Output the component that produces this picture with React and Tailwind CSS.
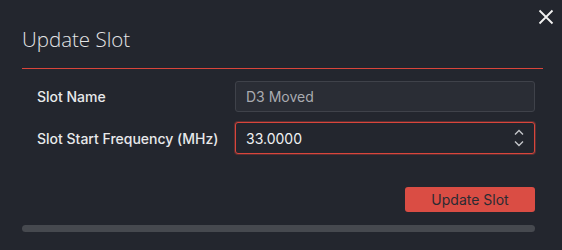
import { useState } from "react";

function CloseIcon() {
  return (
    <svg width="16" height="16" viewBox="0 0 16 16" fill="none">
      <path d="M1.5 1.5 L14.5 14.5 M14.5 1.5 L1.5 14.5" stroke="#f2f2f2" strokeWidth="1.8" />
    </svg>
  );
}

function Spinner() {
  return (
    <div className="flex flex-col items-center gap-[4px] text-[#c4c6cb]">
      <svg width="10" height="7" viewBox="0 0 10 7" fill="none">
        <path d="M1 5.5 L5 1.5 L9 5.5" stroke="currentColor" strokeWidth="1.4" />
      </svg>
      <svg width="10" height="7" viewBox="0 0 10 7" fill="none">
        <path d="M1 1.5 L5 5.5 L9 1.5" stroke="currentColor" strokeWidth="1.4" />
      </svg>
    </div>
  );
}

export default function App() {
  const [freq, setFreq] = useState("33.0000");

  return (
    <div className="relative w-[562px] h-[250px] overflow-hidden bg-[#23262e] font-['Inter',sans-serif]">
      {/* close */}
      <button className="absolute top-[9px] right-[8px]">
        <CloseIcon />
      </button>

      <div className="pl-[22px] pr-[19px]">
        {/* header */}
        <div className="h-[69px] border-b border-[#d9453b] pt-[25px]">
          <h2 className="font-['Open_Sans',sans-serif] font-light text-[20.5px] leading-[28px] text-[#e4e5e7]">
            Update Slot
          </h2>
        </div>

        {/* form */}
        <div className="pl-[15px] pr-[8px] pt-[12px] flex flex-col gap-[10px]">
          <div className="flex items-center">
            <label className="w-[198px] text-[14px] font-medium text-[#e8e9eb]">Slot Name</label>
            <input
              disabled
              value="D3 Moved"
              className="flex-1 h-[31px] rounded-[3px] border border-[#3f424a] bg-[#2a2d35] px-[10px] text-[14px] text-[#a9abb0]"
            />
          </div>
          <div className="flex items-center">
            <label className="w-[198px] text-[14px] font-medium text-[#e8e9eb]">
              Slot Start Frequency (MHz)
            </label>
            <div className="flex-1 h-[32px] flex items-center rounded-[3px] border border-[#d9453b] ring-1 ring-[#d9453b]/30 bg-[#23262e] pl-[10px] pr-[10px]">
              <input
                value={freq}
                onChange={(e) => setFreq(e.target.value)}
                className="flex-1 bg-transparent outline-none text-[14px] text-[#f0f1f3]"
              />
              <Spinner />
            </div>
          </div>
        </div>

        {/* actions */}
        <div className="pr-[8px] pt-[33px] flex justify-end">
          <button className="w-[130px] h-[25px] rounded-[3px] bg-[#da4d44] text-[14px] text-[#2a2b32]">
            Update Slot
          </button>
        </div>

        {/* scrollbar */}
        <div className="mt-[13px] mr-[8px] h-[7px] rounded-full bg-[#46494f]"></div>
      </div>
    </div>
  );
}
